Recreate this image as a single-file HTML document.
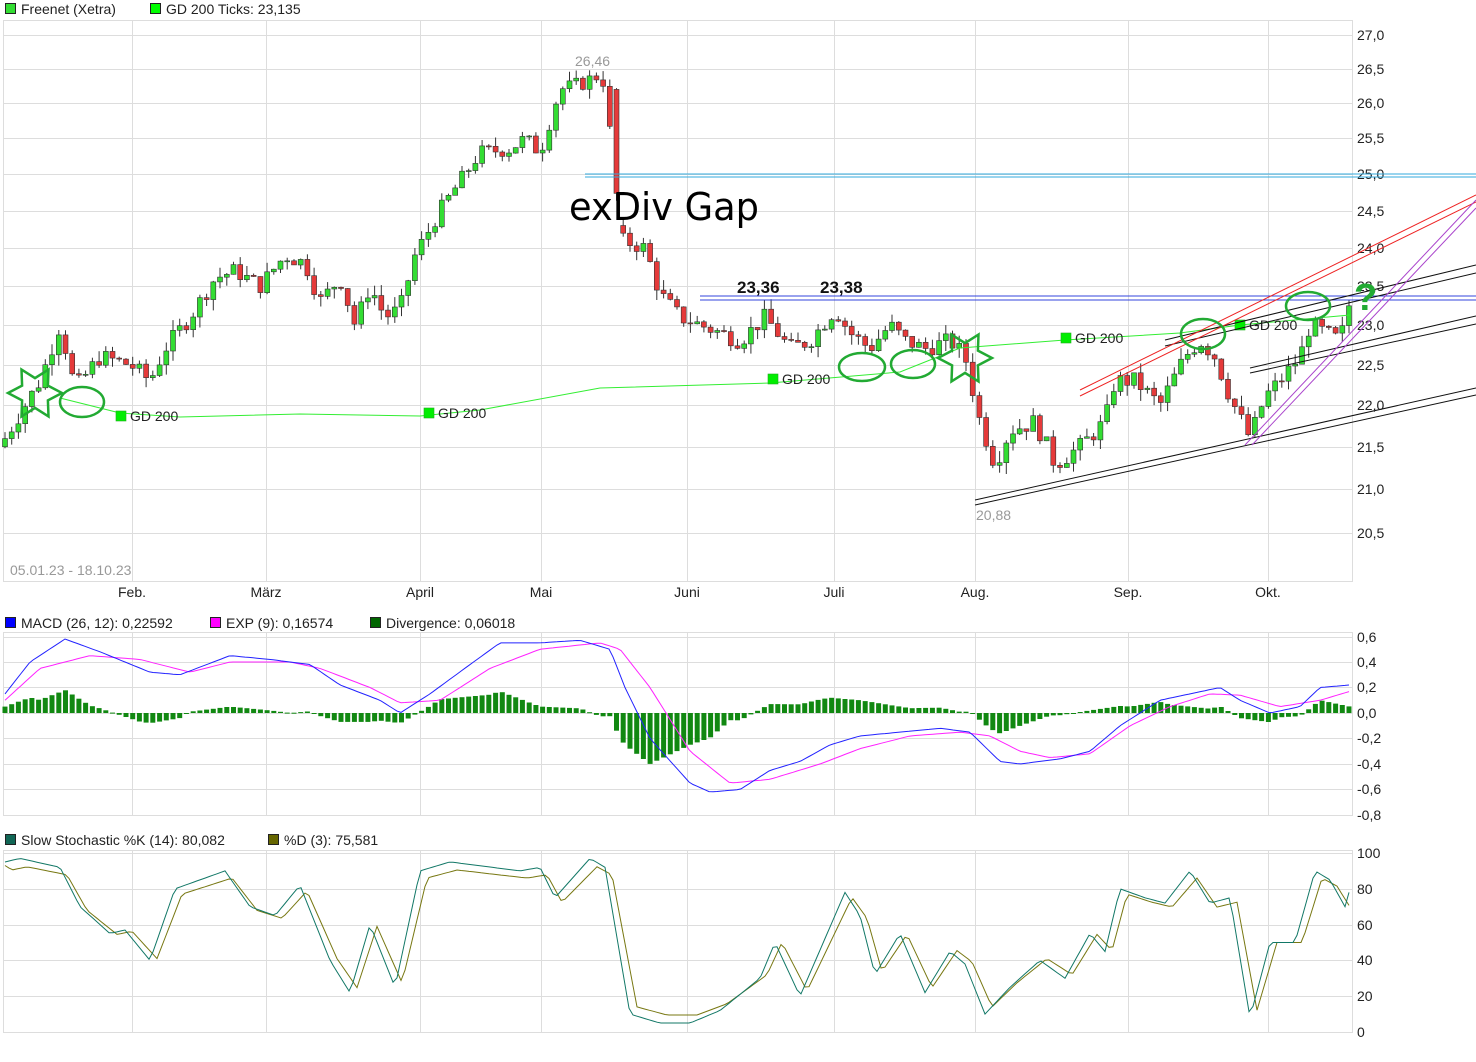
<!DOCTYPE html>
<html><head><meta charset="utf-8"><style>
body{margin:0;background:#fff;font-family:"Liberation Sans",sans-serif;}
svg{display:block}
</style></head><body>
<svg id="s" width="1476" height="1062" xmlns="http://www.w3.org/2000/svg" font-family="Liberation Sans, sans-serif"></svg>
<script>
const S=document.getElementById('s');let h='';
function Y(p){return 35+(Math.log(27)-Math.log(p))*1808;}
function interp(k,x){for(let i=0;i<k.length-1;i++){if(x<=k[i+1][0]){const a=k[i],b=k[i+1];return a[1]+(b[1]-a[1])*(x-a[0])/(b[0]-a[0]);}}return k[k.length-1][1];}
let rs=7;function rnd(){rs=(rs*9301+49297)%233280;return rs/233280;}
const months=[[132,'Feb.'],[266,'März'],[420,'April'],[541,'Mai'],[687,'Juni'],[834,'Juli'],[975,'Aug.'],[1128,'Sep.'],[1268,'Okt.']];
function panel(y0,y1,hl){h+=`<rect x="3.5" y="${y0+.5}" width="1349" height="${y1-y0}" fill="#fff" stroke="#ddd"/>`;
months.forEach(m=>h+=`<line x1="${m[0]+.5}" y1="${y0}" x2="${m[0]+.5}" y2="${y1}" stroke="#ddd"/>`);
hl.forEach(l=>{h+=`<line x1="3" y1="${l[0]+.5}" x2="1352" y2="${l[0]+.5}" stroke="#ddd"/><text x="1357" y="${l[0]+5}" font-size="14" fill="#222">${l[1]}</text>`;});}
function leg(x,y,c,t){h+=`<rect x="${x+.5}" y="${y-9.5}" width="10" height="10" fill="${c}" stroke="#222"/><text x="${x+16}" y="${y+1}" font-size="14" fill="#222">${t}</text>`;}
leg(5,13,'#33dd33','Freenet (Xetra)');leg(150,13,'#00ff00','GD 200 Ticks: 23,135');
const pl=['27,0','26,5','26,0','25,5','25,0','24,5','24,0','23,5','23,0','22,5','22,0','21,5','21,0','20,5'];
panel(20,581,pl.map(t=>[Math.round(Y(parseFloat(t.replace(',','.')))),t]));
months.forEach(m=>h+=`<text x="${m[0]}" y="597" font-size="14" fill="#222" text-anchor="middle">${m[1]}</text>`);
const pk=[[5,21.6],[20,21.9],[40,22.3],[60,23.0],[75,22.2],[100,22.6],[130,22.5],[150,22.3],[165,22.7],[190,23.1],[215,23.6],[235,23.7],[260,23.5],[285,23.9],[305,23.8],[320,23.3],[340,23.6],[355,23.0],[370,23.5],[385,23.1],[400,23.2],[415,23.9],[440,24.5],[460,24.9],[480,25.3],[510,25.35],[525,25.5],[540,25.3],[560,26.2],[585,26.3],[595,26.4],[605,26.3],[614,25.0],[622,24.1],[645,24.0],[660,23.4],[680,23.1],[700,23.0],[740,22.8],[765,23.1],[790,22.7],[810,22.8],[835,23.2],[850,22.9],[870,22.7],[890,23.0],[905,22.8],[925,22.7],[950,22.8],[965,22.6],[980,21.8],[995,21.3],[1010,21.7],[1035,21.8],[1055,21.3],[1080,21.5],[1105,21.8],[1115,22.3],[1135,22.3],[1160,22.0],[1185,22.6],[1200,22.8],[1215,22.6],[1230,22.1],[1250,21.6],[1265,22.1],[1280,22.3],[1300,22.6],[1310,23.0],[1325,22.9],[1340,22.8],[1350,23.3]];
let prev=21.5;
for(let x=5;x<=1350;x+=6.72){let c=interp(pk,x)+(rnd()-.5)*0.22;let o=prev;if(x>610&&x<620)o=26.2;if(x>618&&x<626)o=24.3;
let hi=Math.max(o,c)+rnd()*0.14,lo=Math.min(o,c)-rnd()*0.14;const up=c>=o;
const yo=Y(o),yc=Y(c);const top=Math.min(yo,yc),bh=Math.max(1,Math.abs(yo-yc));
h+=`<line x1="${x.toFixed(1)}" y1="${Y(hi).toFixed(1)}" x2="${x.toFixed(1)}" y2="${Y(lo).toFixed(1)}" stroke="#333"/>`;
h+=`<rect x="${(x-2.5).toFixed(1)}" y="${top.toFixed(1)}" width="5" height="${bh.toFixed(1)}" fill="${up?'#33dd33':'#e53a3a'}" stroke="#333" stroke-width=".6"/>`;prev=c;}
const gd=[[60,398],[120,413],[180,417],[300,414],[420,416],[480,410],[600,388],[770,383],[900,372],[960,348],[1065,340],[1180,333],[1240,325],[1350,315]];
h+=`<polyline fill="none" stroke="#33ee33" stroke-width="1" points="${gd.map(p=>p.join(',')).join(' ')}"/>`;
[[116,417],[424,414],[768,380],[1061,339],[1235,326]].forEach(p=>{h+=`<rect x="${p[0]}" y="${p[1]-6}" width="10" height="10" fill="#00ee00" stroke="#2a2" stroke-width=".6"/><text x="${p[0]+14}" y="${p[1]+4}" font-size="14" fill="#222">GD 200</text>`;});
function L(a,b,c,d,col,w){h+=`<line x1="${a}" y1="${b}" x2="${c}" y2="${d}" stroke="${col}" stroke-width="${w||1}"/>`;}
L(585,174,1476,174,'#33aadd');L(585,177,1476,177,'#33aadd');
L(700,296,1476,296,'#3344dd');L(700,300,1476,300,'#3344dd');
L(975,500,1476,388,'#111');L(975,505,1476,395,'#111');
L(1250,368,1476,316,'#111');L(1250,373,1476,324,'#111');
L(1165,340,1476,265,'#111');L(1165,346,1476,273,'#111');
L(1080,390,1476,195,'#e22');L(1080,396,1476,202,'#e22');
L(1245,445,1476,200,'#a4c');L(1252,445,1476,208,'#a4c');
[[82,402,22,15],[862,367,23,14],[913,364,22,14],[1203,334,22,15],[1308,306,22,14]].forEach(e=>h+=`<ellipse cx="${e[0]}" cy="${e[1]}" rx="${e[2]}" ry="${e[3]}" fill="none" stroke="#2a3" stroke-width="2.5"/>`);
function star(cx,cy,r){let p=[];for(let i=0;i<12;i++){const a=Math.PI/6*i,rr=i%2?r*0.55:r;p.push((cx+rr*Math.cos(a)).toFixed(1)+','+(cy+rr*Math.sin(a)).toFixed(1));}h+=`<polygon points="${p.join(' ')}" fill="none" stroke="#2a3" stroke-width="2.5"/>`;}
star(35,393,27);star(965,358,27);
h+=`<text x="1354" y="310" font-size="38" font-weight="bold" fill="#2a3">?</text>`;
h+=`<text x="569" y="220" font-size="38" fill="#000" font-family="DejaVu Sans, sans-serif" textLength="190" lengthAdjust="spacingAndGlyphs">exDiv Gap</text>`;
h+=`<text x="737" y="293" font-size="17" font-weight="bold" fill="#111">23,36</text><text x="820" y="293" font-size="17" font-weight="bold" fill="#111">23,38</text>`;
h+=`<text x="575" y="66" font-size="14" fill="#999">26,46</text><text x="976" y="520" font-size="14" fill="#999">20,88</text><text x="10" y="575" font-size="14" fill="#999">05.01.23 - 18.10.23</text>`;
leg(5,627,'#0000ff','MACD (26, 12): 0,22592');leg(210,627,'#ff00ff','EXP (9): 0,16574');leg(370,627,'#006600','Divergence: 0,06018');
panel(632,815,[[637,'0,6'],[662,'0,4'],[687,'0,2'],[713,'0,0'],[738,'-0,2'],[764,'-0,4'],[789,'-0,6'],[815,'-0,8']]);
const mb=[[5,0.15],[30,0.4],[65,0.58],[100,0.48],[150,0.32],[180,0.3],[230,0.45],[270,0.42],[310,0.38],[340,0.22],[380,0.1],[400,0.0],[430,0.15],[470,0.38],[500,0.55],[540,0.55],[580,0.57],[610,0.5],[625,0.2],[650,-0.2],[690,-0.55],[710,-0.62],[740,-0.6],[770,-0.45],[800,-0.38],[830,-0.25],[860,-0.18],[900,-0.15],[940,-0.12],[970,-0.15],[1000,-0.38],[1020,-0.4],[1060,-0.36],[1090,-0.3],[1120,-0.1],[1160,0.1],[1190,0.15],[1220,0.2],[1240,0.1],[1270,0.0],[1300,0.05],[1320,0.2],[1350,0.22]];
const me=[[5,0.1],[40,0.35],[90,0.45],[140,0.42],[190,0.32],[230,0.4],[290,0.4],[320,0.35],[370,0.2],[400,0.08],[440,0.1],[490,0.35],[540,0.5],[600,0.55],[620,0.5],[650,0.2],[690,-0.3],[730,-0.55],[770,-0.52],[820,-0.4],[860,-0.28],[910,-0.18],[960,-0.15],[990,-0.18],[1020,-0.3],[1050,-0.35],[1090,-0.32],[1130,-0.1],[1170,0.05],[1210,0.15],[1240,0.14],[1280,0.05],[1320,0.1],[1350,0.17]];
const MY=v=>713-v*127.5;
for(let x=5;x<=1350;x+=6.72){const d=interp(mb,x)-interp(me,x);const y=MY(d);h+=`<rect x="${(x-2.5).toFixed(1)}" y="${Math.min(y,713).toFixed(1)}" width="5" height="${Math.max(1,Math.abs(y-713)).toFixed(1)}" fill="#118811"/>`;}
function pline(k,f,col){let p=[];for(let x=5;x<=1350;x+=4)p.push(x+','+f(interp(k,x)).toFixed(1));h+=`<polyline fill="none" stroke="${col}" stroke-width="1" points="${p.join(' ')}"/>`;}
pline(me,MY,'#ff22ff');pline(mb,MY,'#2222ff');
leg(5,844,'#116655','Slow Stochastic %K (14): 80,082');leg(268,844,'#666600','%D (3): 75,581');
panel(850,1032,[[853,'100'],[889,'80'],[925,'60'],[960,'40'],[996,'20'],[1032,'0']]);
const sk=[[5,95],[20,97],[60,92],[80,70],[110,55],[125,57],[150,40],[175,80],[225,90],[250,70],[275,65],[300,82],[330,40],[350,22],[370,60],[395,25],[420,90],[450,95],[520,90],[540,92],[555,75],[590,97],[605,92],[630,10],[660,5],[690,5],[720,12],[760,30],[775,50],[800,20],[845,78],[860,65],[875,32],[900,55],[925,22],[950,45],[965,38],[985,10],[1010,25],[1040,40],[1065,30],[1090,55],[1105,45],[1120,80],[1145,75],[1165,72],[1190,90],[1210,72],[1230,75],[1250,8],[1270,50],[1295,50],[1315,90],[1330,85],[1345,70],[1350,80]];
const sd=sk.map(p=>[p[0]+7,p[1]*0.9+5]);sd.unshift([5,93]);
const SY=v=>1032-v*1.79;
pline(sd,SY,'#777711');pline(sk,SY,'#117766');
S.innerHTML=h;
</script>
</body></html>
